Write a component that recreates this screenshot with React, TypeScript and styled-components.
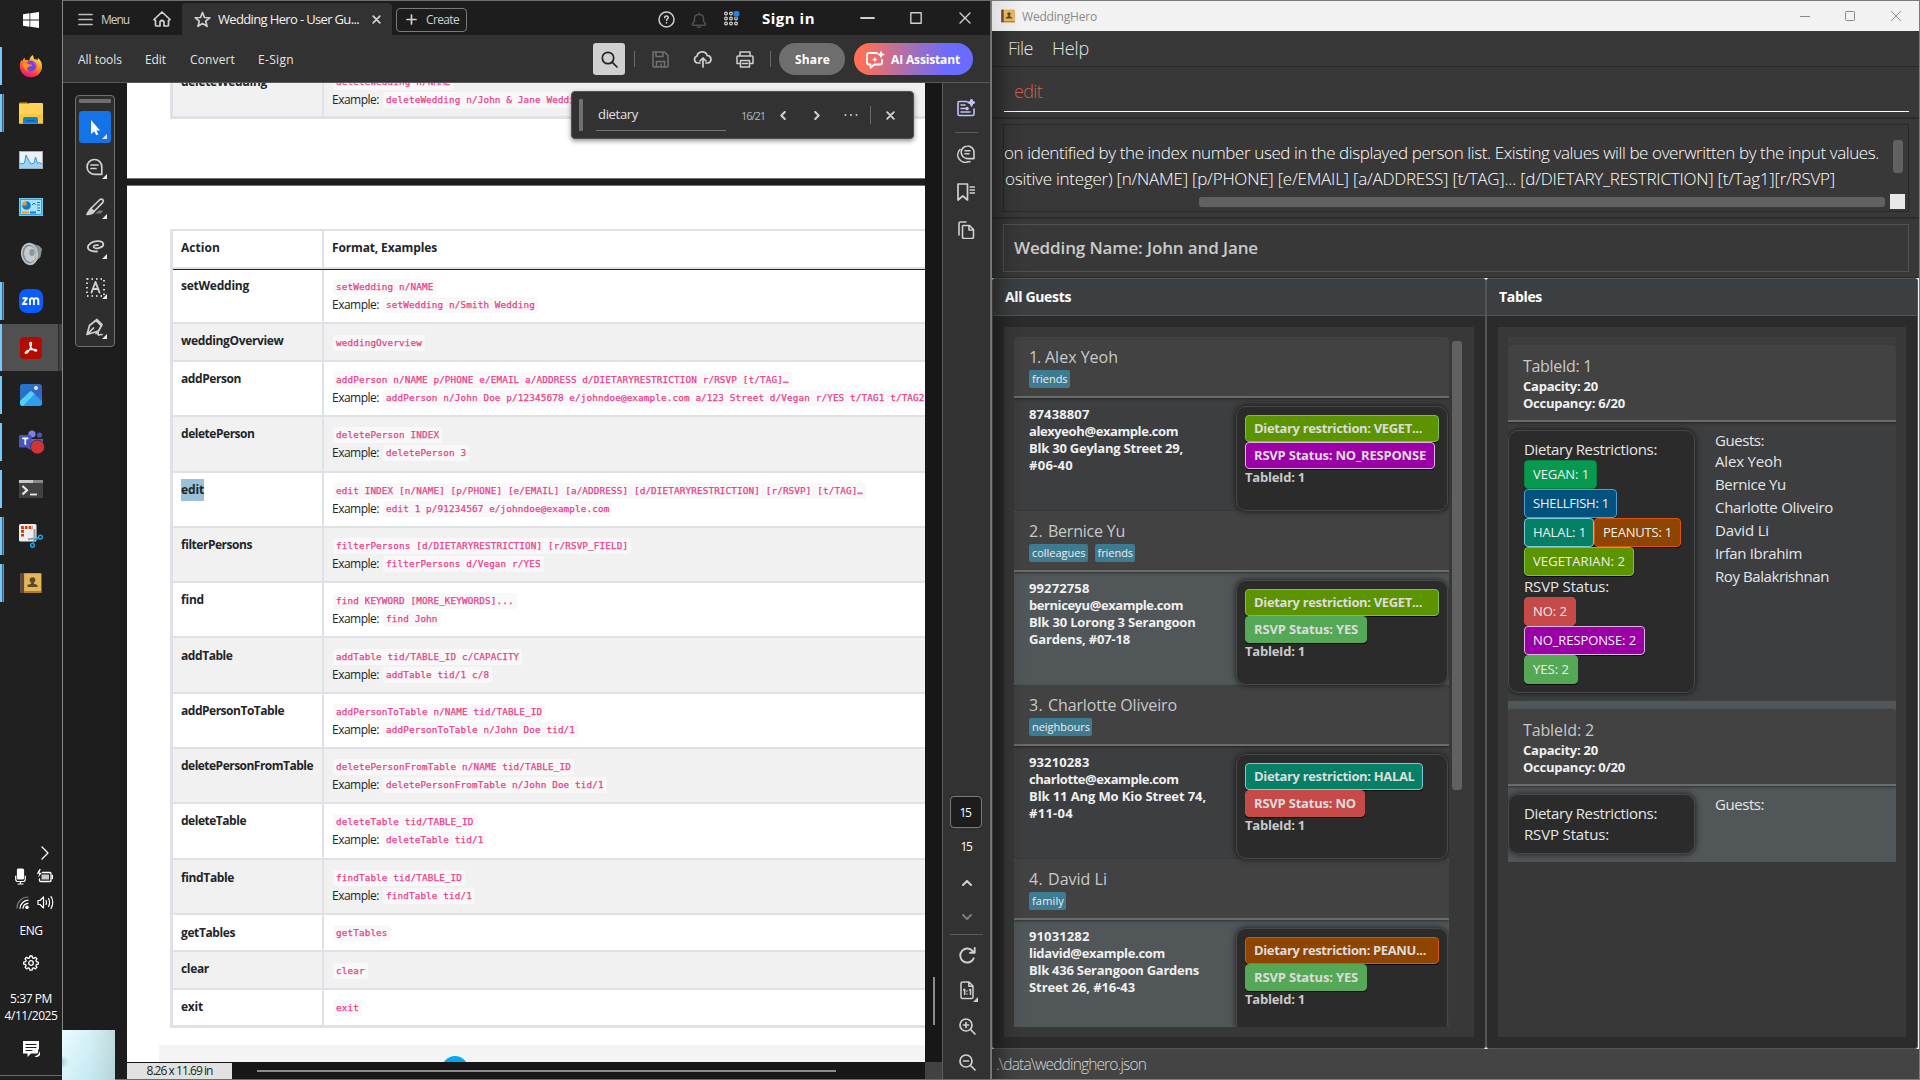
import React, { useLayoutEffect, useRef, useState } from "react";
import styled, { createGlobalStyle, css } from "styled-components";

const Global = createGlobalStyle`
  *, *::before, *::after { box-sizing: border-box; }
  html, body { margin: 0; padding: 0; background: #1d1d1d; overflow: hidden; }
  body { font-family: "Open Sans", "Noto Sans", sans-serif; font-size: 12px; }
  svg { display: block; flex: none; }
`;

/* ---------- text tracked to a given width ---------- */

const TextSpan = styled.span`
  display: inline-block;
  white-space: pre;
`;

function Txt({ w, children }: { w: number; children: string }) {
  const ref = useRef<HTMLSpanElement>(null);
  const [tracking, setTracking] = useState(0);
  useLayoutEffect(() => {
    if (ref.current) {
      const natural = ref.current.getBoundingClientRect().width;
      setTracking((w + 1 - natural) / children.length);
    }
  }, []);
  return (
    <TextSpan ref={ref} style={{ letterSpacing: `${tracking}px` }}>
      {children}
    </TextSpan>
  );
}

/* ---------- shared ---------- */

const Screen = styled.div`
  position: relative;
  display: flex;
  width: 1920px;
  height: 1080px;
  overflow: hidden;
`;

const Spacer = styled.div`
  flex: 1;
`;

/* ---------- taskbar ---------- */

const Taskbar = styled.aside`
  width: 63px;
  height: 1080px;
  flex: none;
  display: flex;
  flex-direction: column;
  background: #202020;
  border-right: 1px solid #868686;
  color: #fff;
`;

const StartButton = styled.div`
  height: 42px;
  padding: 12px 0 0 23px;
`;

const TaskItem = styled.div<{ $active?: boolean }>`
  height: 47px;
  display: flex;
  align-items: center;
  padding-right: ${(p) => (p.$active ? 0 : 4)}px;
  ${(p) =>
    p.$active &&
    css`
      background: linear-gradient(90deg, #505050 58px, #2c2c2c 58px, #2c2c2c 59px, #3f3f3f 59px);
    `}
`;

const RunMark = styled.i<{ $kind: "none" | "one" | "many" | "full" }>`
  width: 4px;
  height: ${(p) => (p.$kind === "full" ? 47 : 38)}px;
  background: ${(p) =>
    p.$kind === "none"
      ? "transparent"
      : p.$kind === "many"
        ? "linear-gradient(90deg, #76c8fb 2px, #35617c 2px, #35617c 2.6px, #5b9fc8 2.6px)"
        : "linear-gradient(90deg, #76c8fb 2px, transparent 2px)"};
`;

const TaskIcon = styled.div`
  width: 54px;
  display: flex;
  justify-content: center;
`;

const Tray = styled.div`
  display: flex;
  flex-direction: column;
  height: 236px;
  padding-top: 5px;
`;

const TrayRow = styled.div<{ $h: number; $gap?: number; $pl?: number }>`
  height: ${(p) => p.$h}px;
  flex: none;
  display: flex;
  align-items: center;
  gap: ${(p) => p.$gap || 0}px;
  padding-left: ${(p) => p.$pl || 0}px;
`;

const TrayText = styled.div<{ $h: number }>`
  height: ${(p) => p.$h}px;
  flex: none;
  line-height: ${(p) => p.$h}px;
  text-align: center;
  font-size: 12px;
`;

const TrayEdge = styled.div`
  height: 1px;
  flex: none;
  margin-bottom: 4px;
  background: #6a6a6a;
`;

const Thumb = styled.div`
  position: absolute;
  left: 62px;
  top: 1030px;
  width: 53px;
  height: 50px;
  background:
    radial-gradient(circle at 0 32px, rgba(140, 180, 190, 0.6), transparent 7px),
    linear-gradient(180deg, rgba(255, 255, 255, 0.15), rgba(170, 215, 225, 0.25)),
    linear-gradient(90deg, #e6fdff, #cdeef6 55%, #b9d3d6);
`;

/* ---------- acrobat ---------- */

const Acrobat = styled.main`
  width: 928px;
  flex: none;
  display: flex;
  flex-direction: column;
  border: solid #6d6d6d;
  border-width: 1px 1px 1px 0;
  background: #1d1d1d;
  color: #e4e4e4;
`;

const TabStrip = styled.div`
  height: 34px;
  flex: none;
  display: flex;
  align-items: center;
  padding-left: 15px;
  background: #1d1d1d;
`;

const At = styled.div<{ $ml?: number; $mt?: number; $c?: string; $fs?: number; $b?: number }>`
  display: flex;
  align-items: center;
  flex: none;
  margin-left: ${(p) => p.$ml || 0}px;
  margin-top: ${(p) => p.$mt || 0}px;
  color: ${(p) => p.$c || "inherit"};
  font-size: ${(p) => p.$fs || 12}px;
  font-weight: ${(p) => p.$b || 400};
`;

const DocTab = styled.div`
  align-self: flex-end;
  width: 210px;
  height: 32px;
  margin-left: 11px;
  padding: 0 11px 0 12px;
  display: flex;
  align-items: center;
  border-radius: 4px 4px 0 0;
  background: #323232;
  color: #f2f2f2;
  font-size: 13px;
`;

const CreateButton = styled.div`
  width: 71px;
  height: 24px;
  margin: 3px 0 0 4px;
  padding-left: 9px;
  display: flex;
  align-items: center;
  border: 1px solid #7a7a7a;
  border-radius: 4px;
  color: #d0d0d0;
`;

const Toolbar = styled.div`
  height: 48px;
  flex: none;
  display: flex;
  align-items: center;
  padding: 1px 0 0 15px;
  background: #323232;
  border-bottom: 1px solid #585858;
`;

const SearchButton = styled.div`
  width: 32px;
  height: 32px;
  display: flex;
  align-items: center;
  justify-content: center;
  border-radius: 3px;
  background: #d0d0d0;
`;

const VLine = styled.i<{ $ml: number; $h?: number }>`
  width: 1px;
  height: ${(p) => p.$h || 16}px;
  margin-left: ${(p) => p.$ml}px;
  background: #6a6a6a;
`;

const Pill = styled.div<{ $w: number; $bg: string; $ml: number; $pl: number }>`
  width: ${(p) => p.$w}px;
  height: 32px;
  margin-left: ${(p) => p.$ml}px;
  padding-left: ${(p) => p.$pl}px;
  display: flex;
  align-items: center;
  gap: 6px;
  border-radius: 16px;
  background: ${(p) => p.$bg};
  color: #fff;
  font-size: 12px;
  font-weight: 700;
`;

const Viewer = styled.div`
  flex: 1;
  min-height: 0;
  display: flex;
`;

const Gutter = styled.div`
  width: 64px;
  flex: none;
  padding: 12px 0 0 12px;
`;

const Palette = styled.div`
  width: 40px;
  height: 252px;
  display: flex;
  flex-direction: column;
  align-items: center;
  padding-top: 3px;
  border: 1px solid #717171;
  border-radius: 4px;
  background: #2e2e2e;
`;

const Grip = styled.i`
  width: 32px;
  height: 4px;
  flex: none;
  margin-bottom: 8px;
  border-radius: 1px;
  background: #6f6f6f;
`;

const Tool = styled.div<{ $on?: boolean }>`
  width: 32px;
  height: 32px;
  flex: none;
  margin-bottom: 8px;
  border-radius: 3px;
  background: ${(p) => (p.$on ? "#1473e6" : "transparent")};
`;

const Doc = styled.div`
  width: 798px;
  flex: none;
  display: flex;
  flex-direction: column;
`;

const PageTop = styled.div`
  height: 96px;
  flex: none;
  overflow: hidden;
  padding-left: 43px;
  background: #fff;
  border-bottom: 1px solid #707070;
`;

const PageMain = styled.div`
  height: 877px;
  flex: none;
  margin-top: 6px;
  overflow: hidden;
  display: flex;
  flex-direction: column;
  border-top: 1px solid #707070;
  background: #fff;
`;

const Table = styled.div<{ $first?: boolean }>`
  border-left: 3px solid #dee2e6;
  border-bottom: 1px solid #dee2e6;
  color: #212529;
  ${(p) =>
    p.$first
      ? css`
          margin-top: -20px;
        `
      : css`
          margin: 43px 0 0 43px;
          border-top: 2px solid #dee2e6;
        `}
`;

const HeadRow = styled.div`
  height: 39px;
  display: grid;
  grid-template-columns: 151px 1fr;
  border-bottom: 1px solid #20242a;
  font-weight: 700;
  line-height: 34px;
`;

const HeadCell = styled.div<{ $last?: boolean }>`
  padding-left: 8px;
  border-right: ${(p) => (p.$last ? "none" : "2px solid #dee2e6")};
  border-bottom: 2px solid #dee2e6;
`;

const Row = styled.div<{ $h: number; $alt?: boolean }>`
  height: ${(p) => p.$h + 2}px;
  display: grid;
  grid-template-columns: 151px 1fr;
  border-bottom: 2px solid #dee2e6;
  background: ${(p) => (p.$alt ? "#f1f1f1" : "#fff")};
`;

const NameCell = styled.div<{ $pt: number }>`
  padding: ${(p) => p.$pt}px 0 0 8px;
  border-right: 2px solid #dee2e6;
  font-weight: 700;
  line-height: 18px;
`;

const FormatCell = styled.div<{ $pt: number }>`
  padding: ${(p) => p.$pt}px 0 0 8px;
  min-width: 0;
  overflow: hidden;
`;

const CodeLine = styled.div`
  height: 18px;
  display: flex;
  align-items: center;
  white-space: nowrap;
  line-height: 18px;
`;

const Code = styled.code<{ $gap?: boolean }>`
  height: 16px;
  flex: none;
  line-height: 16px;
  margin-left: ${(p) => (p.$gap ? 4 : 1)}px;
  padding: 0 3px 0 3px;
  border-radius: 3px;
  background: #f8f8f8;
  color: #e83e8c;
  font-family: "DejaVu Sans Mono", "Liberation Mono", monospace;
  font-size: 9.3px;
  letter-spacing: 0.132px;
  -webkit-text-stroke: 0.25px #e83e8c;
`;

const Mark = styled.span`
  display: inline-block;
  height: 22px;
  line-height: 22px;
  margin-top: -2px;
  background: #9bc0da;
`;

const PageFooter = styled.div`
  height: 17px;
  margin: 17px 0 0 32px;
  overflow: hidden;
  background: #f4f4f4;
`;

const Dot = styled.i`
  display: block;
  width: 26px;
  height: 26px;
  margin: 11px 0 0 283px;
  border-radius: 50%;
  background: #06a9f0;
`;

const BottomBar = styled.div`
  flex: 1;
  display: flex;
  align-items: center;
  background: #171717;
`;

const PageSize = styled.div`
  width: 105px;
  height: 16px;
  display: flex;
  align-items: center;
  justify-content: center;
  background: #e1e1e1;
  color: #222;
`;

const HThumb = styled.i`
  width: 579px;
  height: 2px;
  margin-left: 25px;
  background: #8c8c8c;
`;

const ScrollStrip = styled.div`
  width: 17px;
  flex: none;
  display: flex;
  flex-direction: column;
  align-items: center;
  background: #171717;
`;

const VThumb = styled.i`
  width: 2px;
  height: 48px;
  margin: 894px 0 37px;
  background: #8c8c8c;
`;

const Corner = styled.i`
  width: 17px;
  flex: 1;
  background: #424242;
`;

const Rail = styled.div`
  width: 48px;
  flex: none;
  display: flex;
  flex-direction: column;
  align-items: center;
  padding-right: 1px;
  border-left: 1px solid #5c5c5c;
  background: #323232;
  color: #d0d0d0;
`;

const RailCell = styled.div<{ $h: number; $dx?: number }>`
  height: ${(p) => p.$h}px;
  flex: none;
  display: flex;
  align-items: center;
  justify-content: center;
  padding-left: ${(p) => p.$dx || 0}px;
  color: #fff;
  font-size: 12px;
`;

const RailLine = styled.i<{ $w: number }>`
  width: ${(p) => p.$w}px;
  height: 1px;
  flex: none;
  background: #5c5c5c;
`;

const PageBox = styled.div`
  width: 32px;
  height: 32px;
  flex: none;
  display: flex;
  align-items: center;
  justify-content: center;
  padding-right: 2px;
  border: 1px solid #7a7a7a;
  border-radius: 4px;
  background: #1d1d1d;
`;

const FindBar = styled.div`
  position: absolute;
  left: 571px;
  top: 91px;
  width: 343px;
  height: 48px;
  display: flex;
  align-items: center;
  padding-left: 7px;
  border: 1px solid #515151;
  border-radius: 4px;
  background: #323232;
  box-shadow: 0 2px 5px rgba(0, 0, 0, 0.45);
  color: #d8d8d8;
`;

const FindGrip = styled.i`
  width: 4px;
  height: 32px;
  border-radius: 1px;
  background: #707070;
`;

const FindInput = styled.div`
  width: 130px;
  height: 32px;
  margin-left: 13px;
  padding: 0 0 0 2px;
  line-height: 30px;
  border-bottom: 1px solid #757575;
  font-size: 13px;
  color: #e2e2e2;
`;

/* ---------- wedding app ---------- */

const WeddingWindow = styled.section`
  position: relative;
  width: 929px;
  display: flex;
  flex-direction: column;
  border: 1px solid #7b7b7b;
  background: #383838;
  color: #e6e6e6;
`;

const EdgeShade = styled.i`
  position: absolute;
  left: 0;
  top: 30px;
  width: 34px;
  bottom: 0;
  background: linear-gradient(90deg, rgba(0, 0, 0, 0.34), rgba(0, 0, 0, 0.08) 50%, transparent);
  pointer-events: none;
`;

const TitleBar = styled.div`
  height: 30px;
  display: flex;
  align-items: center;
  padding-left: 9px;
  background: linear-gradient(90deg, #e0e0e0, #f2f2f2 30px);
  color: #8a8a8a;
`;

const MenuBar = styled.div`
  height: 36px;
  display: flex;
  align-items: center;
  padding: 0 0 1px 16px;
  gap: 19px;
  border-bottom: 1px solid #292929;
  font-size: 18px;
  font-weight: 300;
`;

const CommandArea = styled.div`
  height: 52px;
  padding: 4px 10px 0 12px;
  border-bottom: 2px solid #2c2c2c;
`;

const CommandInput = styled.div`
  height: 41px;
  padding-left: 10px;
  line-height: 40px;
  border-bottom: 1px solid #fff;
  color: #cf604e;
  font-size: 18px;
  font-weight: 300;
`;

const ResultArea = styled.div`
  height: 100px;
  padding: 5px 10px 6px 11px;
  border-bottom: 2px solid #2c2c2c;
`;

const ResultBox = styled.div`
  height: 88px;
  border: 1px solid #282828;
`;

const ResultTop = styled.div`
  height: 69px;
  display: flex;
  justify-content: space-between;
  padding: 15px 5px 0 0;
`;

const ResultText = styled.div`
  line-height: 26px;
  font-size: 17px;
  font-weight: 300;
  color: #fff;
`;

const ResultLine = styled.div<{ $ml?: number }>`
  margin-left: ${(p) => p.$ml || 0}px;
  height: 26px;
`;

const Bar = styled.i<{ $w: number; $h: number }>`
  display: block;
  flex: none;
  width: ${(p) => p.$w}px;
  height: ${(p) => p.$h}px;
  border-radius: 3px;
  background: #616161;
`;

const ResultBottom = styled.div`
  display: flex;
  align-items: center;
  justify-content: flex-end;
  gap: 5px;
  padding-right: 3px;
`;

const ScrollCorner = styled.i`
  width: 15px;
  height: 15px;
  background: #e8e8e8;
`;

const NameArea = styled.div`
  height: 59px;
  padding: 5px 10px 0 11px;
  border-bottom: 1px solid #2c2c2c;
`;

const NameBox = styled.div`
  height: 48px;
  padding-left: 10px;
  line-height: 46px;
  border: 1px solid #525252;
  color: #cbcbcb;
  font-size: 17px;
  font-weight: 600;
`;

const Split = styled.div`
  height: 771px;
  display: flex;
  background: #f4f4f4;
`;

const Pane = styled.div<{ $w: number }>`
  width: ${(p) => p.$w}px;
  flex: none;
  border: 1px solid #555;
  border-radius: 3px;
  overflow: hidden;
  background: #2b2b2b;
`;

const PaneHead = styled.div`
  height: 37px;
  padding-left: 12px;
  line-height: 36px;
  border-bottom: 1px solid #555;
  background: #3c3f41;
  color: #fff;
  font-size: 14px;
  font-weight: 700;
`;

const PaneBody = styled.div`
  height: 710px;
  margin: 11px 11px 0;
  padding: 10px;
  display: flex;
  gap: 3px;
  background: #383838;
`;

const List = styled.div<{ $w: number }>`
  width: ${(p) => p.$w}px;
  height: 690px;
  flex: none;
  overflow: hidden;
`;

const ListBar = styled.div`
  padding-top: 4px;
`;

const cell = (alt?: boolean) => (alt ? "#515658" : "#3c3e40");

const Guest = styled.div<{ $alt?: boolean }>`
  height: 174px;
  background: ${(p) => cell(p.$alt)};
`;

const CardHead = styled.div<{ $h: number; $pt: number }>`
  height: ${(p) => p.$h}px;
  padding: ${(p) => p.$pt}px 15px 0;
  border-bottom: 2px solid #6b6b6b;
  border-radius: 4px 4px 0 0;
  background: #424242;
  box-shadow: 0 1px 3px rgba(0, 0, 0, 0.45);
`;

const CardTitle = styled.div`
  height: 22px;
  display: flex;
  gap: 5px;
  line-height: 22px;
  font-size: 16px;
  color: #c9c9c9;
`;

const Tags = styled.div`
  display: flex;
  gap: 7px;
  margin-top: 2px;
`;

const Tag = styled.span`
  height: 18px;
  line-height: 18px;
  padding: 0 2px 0 3px;
  border-radius: 2px;
  background: #3e7b91;
  color: #eee;
  font-size: 11px;
`;

const GuestBody = styled.div`
  display: flex;
`;

const Fields = styled.div`
  width: 222px;
  padding: 8px 0 0 15px;
  color: #f0f0f0;
  font-size: 13px;
  font-weight: 700;
  line-height: 17px;
`;

const Panel = styled.div<{ $w: number; $p: string; $h?: number }>`
  width: ${(p) => p.$w}px;
  ${(p) => p.$h && `height: ${p.$h}px;`}
  margin-top: 8px;
  padding: ${(p) => p.$p};
  border: 1px solid #484848;
  border-radius: 10px;
  background: #2b2b2b;
  box-shadow: 0 0 6px rgba(0, 0, 0, 0.7);
`;

const GuestPanelText = styled.div`
  height: 17px;
  line-height: 17px;
  font-size: 13px;
  font-weight: 700;
  color: #c9c9c9;
`;

const Chip = styled.div<{ $bg: string; $bd: string; $h: number; $w: number; $b?: boolean }>`
  width: ${(p) => p.$w}px;
  height: ${(p) => p.$h}px;
  padding-left: 8px;
  line-height: ${(p) => p.$h - 3}px;
  border: 1px solid ${(p) => p.$bd};
  border-radius: 4px;
  background: ${(p) => p.$bg};
  box-shadow: 0 1px 0 rgba(0, 0, 0, 0.8);
  color: ${(p) => (p.$b ? "#dcdcdc" : "#f0f0f0")};
  font-size: 13px;
  font-weight: ${(p) => (p.$b ? 700 : 400)};
`;

const ChipRow = styled.div`
  display: flex;
`;

const TableCard = styled.div<{ $alt?: boolean }>`
  padding: 8px 0;
  background: ${(p) => cell(p.$alt)};
`;

const TableFacts = styled.div`
  margin-top: 1px;
  line-height: 17px;
  font-size: 13px;
  font-weight: 700;
  color: #f0f0f0;
`;

const TableBody = styled.div`
  display: flex;
`;

const SumLabel = styled.div<{ $h?: number }>`
  height: ${(p) => p.$h || 21}px;
  line-height: 21px;
  font-size: 15px;
  color: #e6e6e6;
`;

const GuestNames = styled.div`
  padding: 8px 0 0 20px;
  font-size: 15px;
  color: #e6e6e6;
`;

const GuestName = styled.div`
  height: 23px;
  line-height: 23px;
`;

const StatusBar = styled.div`
  flex: 1;
  display: flex;
  align-items: center;
  padding-left: 4px;
  background: #444;
  font-size: 15.5px;
  font-weight: 300;
  color: #d8d8d8;
`;

/* ---------- icons ---------- */

type IcoProps = {
  s?: number;
  w?: number;
  h?: number;
  c?: string;
  sw?: number;
  children: React.ReactNode;
};

const Ico = ({ s = 18, w, h, c = "#d0d0d0", sw = 1.6, children }: IcoProps) => (
  <svg
    width={w || s}
    height={h || s}
    viewBox={`0 0 ${w || s} ${h || s}`}
    fill="none"
    stroke={c}
    strokeWidth={sw}
    strokeLinecap="round"
    strokeLinejoin="round"
  >
    {children}
  </svg>
);

const Book = ({ s }: { s: number }) => (
  <svg width={s} height={s} viewBox="0 0 22 22">
    <rect x="0.5" y="1" width="21" height="20" rx="1" fill="#c99a4a" />
    <rect x="4" y="2" width="17" height="17" fill="#e6b558" />
    <rect x="0.5" y="1" width="3.6" height="20" fill="#5c4a42" />
    <rect x="4" y="19.2" width="17.5" height="1.6" fill="#a87728" />
    <circle cx="12.5" cy="8" r="2.8" fill="#5b4a2a" />
    <path d="M11.3 10h2.4l.4 1.8 3.4 1.2v2h-10v-2l3.4-1.2z" fill="#5b4a2a" />
  </svg>
);

const taskIcons: { kind: "none" | "one" | "many" | "full"; icon: React.ReactNode }[] = [
  {
    kind: "one",
    icon: (
      <svg width="24" height="24" viewBox="0 0 24 24">
        <defs>
          <linearGradient id="fx" x1="0.8" y1="0" x2="0.3" y2="1">
            <stop offset="0" stopColor="#fff44f" />
            <stop offset="0.4" stopColor="#ff9a1f" />
            <stop offset="0.75" stopColor="#ff3b47" />
            <stop offset="1" stopColor="#e3128a" />
          </linearGradient>
        </defs>
        <path
          d="M13.5 1c1 1.300 1.400 2.800 1.600 4.300C16.800 5 18 5.200 19 6c-.1-1-.3-1.600-.2-2.200C21.800 6.200 23.500 9.500 23 13.500 22.300 19.500 17.500 23.300 12 23.300 5.800 23.300.8 18.500.8 12.300c0-2.800.8-5 1.900-6.600l.4 1.800C3.700 5.800 4.500 4.500 5.600 3.600l.4 2.500c1.500-.4 3-.1 4.300.6C10.600 4.500 11.600 2.400 13.500 1z"
          fill="url(#fx)"
        />
        <circle cx="12" cy="12" r="5.400" fill="#7a3fe0" />
        <path d="M3.500 10.500c2-1.800 4.300-1.800 6.500-.3 1.500.2 2.700.2 3.300 1.100-1.300 1.300-3.500.9-4.700 2.300-.8 1-.6 2.600.4 3.700-3-.6-5-3-5.500-6.800z" fill="#ff9021" />
        <path d="M14 7.500c2 1 3 2.600 3.300 4.500" stroke="#b45cff" strokeWidth="1.300" fill="none" />
      </svg>
    ),
  },
  {
    kind: "many",
    icon: (
      <svg width="24" height="22" viewBox="0 0 24 22">
        <path d="M0 1.500Q0 .5 1 .5h7l2 2h-10z" fill="#d99f00" />
        <path d="M0 2h8.500l2-1H23q1 0 1 1v19.500H0z" fill="#ffd257" />
        <path d="M0 12h24v9.500H0z" fill="#fbc93d" />
        <path d="M4 21.500V17q0-2 2-2h11q2 0 2 2v4.500z" fill="#0f7fd4" />
        <path d="M8 18.500h7.500" stroke="#085a9c" />
      </svg>
    ),
  },
  {
    kind: "none",
    icon: (
      <svg width="24" height="18" viewBox="0 0 24 18">
        <rect x=".5" y=".5" width="23" height="17" fill="#eef1f4" stroke="#a4afba" />
        <path d="M1 12l2 1 2.500-1L7 4l3 6 2 3 3-1 1.500-6 2 6.500 2-1L23 13v4H1z" fill="#9cd3f5" />
        <path d="M1 12l2 1 2.500-1L7 4l3 6 2 3 3-1 1.500-6 2 6.500 2-1L23 13" fill="none" stroke="#2d97dd" />
      </svg>
    ),
  },
  {
    kind: "none",
    icon: (
      <svg width="24" height="18" viewBox="0 0 24 18">
        <rect x=".5" y=".5" width="23" height="17" fill="#29a3e8" stroke="#71cbf7" />
        <rect x="2" y="2" width="20" height="14" fill="#a9e2fb" />
        <circle cx="7.500" cy="7.500" r="4.300" fill="#1477c8" />
        <path d="M7.500 7.500V3.200a4.300 4.300 0 0 0-4.300 4.300z" fill="#ff9716" />
        <path d="M13 7l2-2 1.500 2M18 4.500h3M18 7h3M18 10h3M18 12.500h3" stroke="#1477c8" fill="none" />
        <path d="M3 14.500h7" stroke="#ff9716" strokeWidth="2" />
        <path d="M11 14.500h6" stroke="#1477c8" strokeWidth="2" />
      </svg>
    ),
  },
  {
    kind: "none",
    icon: (
      <svg width="23" height="24" viewBox="0 0 23 24">
        <path d="M12 1.500l7.500 2.500 2.500 3-1.500 8-7.500 7z" fill="#8a9094" />
        <ellipse cx="9.500" cy="12" rx="8.500" ry="11.200" transform="rotate(-8 9.500 12)" fill="#bfc5c9" />
        <ellipse cx="9.300" cy="12" rx="6.800" ry="9.300" transform="rotate(-8 9.300 12)" fill="#83898d" />
        <ellipse cx="10" cy="12" rx="5.800" ry="8" transform="rotate(-8 10 12)" fill="#c4cacd" />
        <ellipse cx="12" cy="10.500" rx="2.600" ry="3.400" fill="#8f969a" />
      </svg>
    ),
  },
  {
    kind: "many",
    icon: (
      <svg width="24" height="24" viewBox="0 0 24 24">
        <rect width="24" height="24" rx="8" fill="#0b5cff" />
        <path d="M3.500 9.300H8L3.700 15H8.300" stroke="#fff" strokeWidth="1.900" fill="none" strokeLinejoin="round" />
        <path d="M11 16V11q0-1.800 1.900-1.800T14.900 11v5M14.900 11.200q0-2 2.200-2t2.200 2V16" stroke="#fff" strokeWidth="1.900" fill="none" />
      </svg>
    ),
  },
  {
    kind: "full",
    icon: (
      <svg width="22" height="22" viewBox="0 0 22 22">
        <rect width="22" height="22" rx="4" fill="#b30b00" />
        <path
          d="M10.600 5.300c1.500 0 .9 3.300-.4 6-1.300 2.700-3.100 5.500-4.600 5.100-1.300-.5.800-2.900 4.400-3.700 3.500-.8 7-.4 6.700.9-.4 1.300-3.500-.3-5.300-2.500-1.800-2.300-2.300-5.700-.8-5.800z"
          fill="none"
          stroke="#fff"
          strokeWidth="1.300"
        />
      </svg>
    ),
  },
  {
    kind: "one",
    icon: (
      <svg width="22" height="22" viewBox="0 0 22 22">
        <defs>
          <linearGradient id="ph" x1="0" y1="0" x2="1" y2="1">
            <stop offset="0" stopColor="#1b7fd0" />
            <stop offset="0.6" stopColor="#3a5fc4" />
            <stop offset="1" stopColor="#1f7fe0" />
          </linearGradient>
        </defs>
        <rect width="22" height="22" rx="3" fill="url(#ph)" />
        <path d="M0 17L9.500 8q1.500-1.300 3 0L22 17.500V19q0 3-3 3H3q-3 0-3-3z" fill="#2f9df0" />
        <path d="M0 17L9.500 8q1.500-1.300 3 0l2 2L3 22q-3 0-3-3z" fill="#4fd2f7" />
        <circle cx="16" cy="4" r="2" fill="#e6f4ff" />
      </svg>
    ),
  },
  {
    kind: "one",
    icon: (
      <svg width="28" height="24" viewBox="-2 0 28 24">
        <circle cx="13" cy="4" r="3.600" fill="#7b83eb" />
        <circle cx="20.500" cy="5" r="2.600" fill="#4a53c0" />
        <path d="M7 9h17v7q-1 5-7 5-8-1-10-5z" fill="#5b63d3" />
        <rect x="0" y="5" width="12.500" height="12.500" rx="1" fill="#4b53bc" />
        <path d="M3.300 8.300h6M6.300 8.300v6.500" stroke="#fff" strokeWidth="1.700" />
        <circle cx="18.500" cy="17" r="7" fill="#d13438" stroke="#202020" strokeWidth=".6" />
      </svg>
    ),
  },
  {
    kind: "one",
    icon: (
      <svg width="24" height="18" viewBox="0 0 24 18">
        <rect width="24" height="18" fill="#424242" />
        <rect width="24" height="3" fill="#8a8a8a" />
        <rect width="14" height="3" fill="#c8c8c8" />
        <path d="M3.500 6l4.500 4.200-4.500 4.200" stroke="#e8e8e8" strokeWidth="2.200" fill="none" />
        <path d="M11 14.500h7" stroke="#e8e8e8" strokeWidth="1.800" />
      </svg>
    ),
  },
  {
    kind: "many",
    icon: (
      <svg width="24" height="24" viewBox="0 0 24 24">
        <rect width="17.500" height="17.500" rx="1.500" fill="#e9eef2" />
        <path d="M3.500 12.500V3.500H14" stroke="#d83b01" strokeWidth="3" strokeDasharray="2.600 1.200" fill="none" />
        <path d="M15.500 5v11M9 15.300l10-1" stroke="#9aa0a5" strokeWidth="2" />
        <circle cx="21.500" cy="13.200" r="1.900" stroke="#1aa0e8" strokeWidth="1.500" fill="none" />
        <circle cx="13.500" cy="21.300" r="1.900" stroke="#1aa0e8" strokeWidth="1.500" fill="none" />
        <path d="M14 19.500l1.500-3.500 4.500-2.300" stroke="#1aa0e8" strokeWidth="1.400" fill="none" />
      </svg>
    ),
  },
  { kind: "many", icon: <Book s={22} /> },
];

const Fold = () => <path d="M28 23v5h-5z" fill="#e8e8e8" stroke="none" />;

const CommentShape = () => (
  <>
    <path d="M15.500 8.500a7.300 7.300 0 1 0 0 14.800h7.300V16a7.300 7.300 0 0 0-7.300-7.500z" />
    <path d="M12 14h7M12 17.500h5" />
  </>
);

/* ---------- data ---------- */

type CmdRow = {
  h: number;
  name: string;
  w: number;
  fmt: string;
  ex?: string;
  mark?: boolean;
  namePad?: number;
  fmtPad?: number;
};

const rows: CmdRow[] = [
  {
    h: 52,
    name: "setWedding",
    w: 67,
    fmt: "setWedding n/NAME",
    ex: "setWedding n/Smith Wedding",
    namePad: 7,
    fmtPad: 8,
  },
  { h: 36, name: "weddingOverview", w: 101.5, fmt: "weddingOverview", fmtPad: 10 },
  {
    h: 53,
    name: "addPerson",
    w: 59,
    fmt: "addPerson n/NAME p/PHONE e/EMAIL a/ADDRESS d/DIETARYRESTRICTION r/RSVP [t/TAG]…",
    ex: "addPerson n/John Doe p/12345678 e/johndoe@example.com a/123 Street d/Vegan r/YES t/TAG1 t/TAG2",
  },
  { h: 54, name: "deletePerson", w: 72.5, fmt: "deletePerson INDEX", ex: "deletePerson 3" },
  {
    h: 53,
    name: "edit",
    w: 22,
    fmt: "edit INDEX [n/NAME] [p/PHONE] [e/EMAIL] [a/ADDRESS] [d/DIETARYRESTRICTION] [r/RSVP] [t/TAG]…",
    ex: "edit 1 p/91234567 e/johndoe@example.com",
    mark: true,
  },
  { h: 53, name: "filterPersons", w: 70, fmt: "filterPersons [d/DIETARYRESTRICTION] [r/RSVP_FIELD]", ex: "filterPersons d/Vegan r/YES" },
  { h: 53, name: "find", w: 22, fmt: "find KEYWORD [MORE_KEYWORDS]...", ex: "find John" },
  {
    h: 54,
    name: "addTable",
    w: 50.5,
    fmt: "addTable tid/TABLE_ID c/CAPACITY",
    ex: "addTable tid/1 c/8",
    namePad: 9,
    fmtPad: 10,
  },
  { h: 53, name: "addPersonToTable", w: 102, fmt: "addPersonToTable n/NAME tid/TABLE_ID", ex: "addPersonToTable n/John Doe tid/1" },
  {
    h: 53,
    name: "deletePersonFromTable",
    w: 131,
    fmt: "deletePersonFromTable n/NAME tid/TABLE_ID",
    ex: "deletePersonFromTable n/John Doe tid/1",
  },
  { h: 54, name: "deleteTable", w: 64, fmt: "deleteTable tid/TABLE_ID", ex: "deleteTable tid/1" },
  { h: 53, name: "findTable", w: 52, fmt: "findTable tid/TABLE_ID", ex: "findTable tid/1", namePad: 9 },
  { h: 35, name: "getTables", w: 53, fmt: "getTables", namePad: 9 },
  { h: 36, name: "clear", w: 27, fmt: "clear", fmtPad: 10 },
  { h: 35, name: "exit", w: 21, fmt: "exit" },
];

const CommandRow = ({ row, alt }: { row: CmdRow; alt: boolean }) => (
  <Row $h={row.h} $alt={alt}>
    <NameCell $pt={row.namePad ?? 8}>
      {row.mark ? (
        <Mark>
          <Txt w={row.w}>{row.name}</Txt>
        </Mark>
      ) : (
        <Txt w={row.w}>{row.name}</Txt>
      )}
    </NameCell>
    <FormatCell $pt={row.fmtPad ?? 9}>
      <CodeLine>
        <Code>{row.fmt}</Code>
      </CodeLine>
      {row.ex && (
        <CodeLine>
          <Txt w={46}>Example:</Txt>
          <Code $gap>{row.ex}</Code>
        </CodeLine>
      )}
    </FormatCell>
  </Row>
);

const tone = {
  vegetarian: ["#5c9400", "#7cc142"],
  noResponse: ["#9b00a6", "#dcb6e0"],
  yes: ["#55a855", "#55a855"],
  no: ["#c64a48", "#c64a48"],
  halal: ["#057f66", "#7fc9d6"],
  peanuts: ["#8f4400", "#df5310"],
  vegan: ["#06994f", "#0b8043"],
  shellfish: ["#02527f", "#4b9fd6"],
};
type Tone = keyof typeof tone;
type ChipData = { t: string; tw: number; w: number; tone: Tone };

const GuestChip = ({ d, h, b }: { d: ChipData; h: number; b?: boolean }) => (
  <Chip $bg={tone[d.tone][0]} $bd={tone[d.tone][1]} $h={h} $w={d.w} $b={b}>
    <Txt w={d.tw}>{d.t}</Txt>
  </Chip>
);

type GuestData = {
  no: [string, number];
  n: string;
  nw: number;
  tags: [string, number][];
  fields: [string, number][];
  chips: ChipData[];
};

const rsvpYes: ChipData = { t: "RSVP Status: YES", tw: 103, w: 122, tone: "yes" };

const guests: GuestData[] = [
  {
    no: ["1.", 10],
    n: "Alex Yeoh",
    nw: 72,
    tags: [["friends", 34.5]],
    fields: [
      ["87438807", 59.5],
      ["alexyeoh@example.com", 148],
      ["Blk 30 Geylang Street 29,", 153],
      ["#06-40", 43],
    ],
    chips: [
      { t: "Dietary restriction: VEGET...", tw: 167, w: 194, tone: "vegetarian" },
      { t: "RSVP Status: NO_RESPONSE", tw: 171, w: 190, tone: "noResponse" },
    ],
  },
  {
    no: ["2.", 13],
    n: "Bernice Yu",
    nw: 76,
    tags: [
      ["colleagues", 52.5],
      ["friends", 34.5],
    ],
    fields: [
      ["99272758", 59.5],
      ["berniceyu@example.com", 153],
      ["Blk 30 Lorong 3 Serangoon", 165.5],
      ["Gardens, #07-18", 100],
    ],
    chips: [{ t: "Dietary restriction: VEGET...", tw: 167, w: 194, tone: "vegetarian" }, rsvpYes],
  },
  {
    no: ["3.", 13],
    n: "Charlotte Oliveiro",
    nw: 128,
    tags: [["neighbours", 57]],
    fields: [
      ["93210283", 59.5],
      ["charlotte@example.com", 148.5],
      ["Blk 11 Ang Mo Kio Street 74,", 176],
      ["#11-04", 43],
    ],
    chips: [
      { t: "Dietary restriction: HALAL", tw: 159.5, w: 178, tone: "halal" },
      { t: "RSVP Status: NO", tw: 101, w: 120, tone: "no" },
    ],
  },
  {
    no: ["4.", 13],
    n: "David Li",
    nw: 58,
    tags: [["family", 31]],
    fields: [
      ["91031282", 59.5],
      ["lidavid@example.com", 135],
      ["Blk 436 Serangoon Gardens", 169],
      ["Street 26, #16-43", 105],
    ],
    chips: [{ t: "Dietary restriction: PEANU...", tw: 171, w: 194, tone: "peanuts" }, rsvpYes],
  },
];

const dietRows: ChipData[][] = [
  [{ t: "VEGAN: 1", tw: 55, w: 73, tone: "vegan" }],
  [{ t: "SHELLFISH: 1", tw: 75, w: 93, tone: "shellfish" }],
  [
    { t: "HALAL: 1", tw: 52, w: 70, tone: "halal" },
    { t: "PEANUTS: 1", tw: 68, w: 87, tone: "peanuts" },
  ],
  [{ t: "VEGETARIAN: 2", tw: 91, w: 110, tone: "vegetarian" }],
];
const rsvpRows: ChipData[][] = [
  [{ t: "NO: 2", tw: 33, w: 52, tone: "no" }],
  [{ t: "NO_RESPONSE: 2", tw: 102, w: 121, tone: "noResponse" }],
  [{ t: "YES: 2", tw: 35, w: 54, tone: "yes" }],
];

type TableData = {
  id: number;
  idW: number;
  occ: string;
  diet: ChipData[][];
  rsvp: ChipData[][];
  names: [string, number][];
};

const tables: TableData[] = [
  {
    id: 1,
    idW: 68,
    occ: "Occupancy: 6/20",
    diet: dietRows,
    rsvp: rsvpRows,
    names: [
      ["Alex Yeoh", 66],
      ["Bernice Yu", 70],
      ["Charlotte Oliveiro", 117],
      ["David Li", 53],
      ["Irfan Ibrahim", 86],
      ["Roy Balakrishnan", 113],
    ],
  },
  { id: 2, idW: 70, occ: "Occupancy: 0/20", diet: [], rsvp: [], names: [] },
];

const ChipRows = ({ rows: list }: { rows: ChipData[][] }) => (
  <>
    {list.map((r, i) => (
      <ChipRow key={i}>
        {r.map((d) => (
          <GuestChip key={d.t} d={d} h={29} />
        ))}
      </ChipRow>
    ))}
  </>
);

/* ---------- sections ---------- */

const TaskbarView = () => (
  <Taskbar>
    <StartButton>
      <svg width="16" height="16" viewBox="0 0 16 16" fill="#fff">
        <path d="M0 2.200l6.500-.9v6.300H0zM7.300 1.200L16 0v7.600H7.300zM0 8.400h6.500v6.300L0 13.800zM7.300 8.400H16V16l-8.700-1.200z" />
      </svg>
    </StartButton>
    {taskIcons.map((t, i) => (
      <TaskItem key={i} $active={t.kind === "full"}>
        <RunMark $kind={t.kind} />
        <TaskIcon>{t.icon}</TaskIcon>
      </TaskItem>
    ))}
    <Spacer />
    <Tray>
      <TrayRow $h={18} $pl={41}>
        <Ico w={8} h={14} c="#fff" sw={1.3}>
          <path d="M1 1l6 6-6 6" />
        </Ico>
      </TrayRow>
      <TrayRow $h={28} $pl={15} $gap={10}>
        <Ico w={11} h={17} c="#fff" sw={1.2}>
          <rect x="2.500" y="1" width="6" height="10" rx="1" fill="#fff" />
          <path d="M.7 8v3q0 2.500 2 2.500h5.600q2 0 2-2.500V8M5.500 13.500v2.500M3 16h5" />
        </Ico>
        <Ico w={17} h={14} c="#fff" sw={1.3}>
          <path d="M6.500 3.500H14q1 0 1 1v7q0 1-1 1H4.500q-1 0-1-1V10M16.500 6.500v3" />
          <rect x="5.500" y="5.500" width="7.500" height="5" fill="#c8c8c8" stroke="none" />
          <path d="M3.500 0L.8 4.700h2.400L2.200 8.500 5.800 3.700H3.400L4.800 0z" fill="#fff" stroke="none" />
        </Ico>
      </TrayRow>
      <TrayRow $h={24} $pl={16} $gap={8}>
        <Ico s={13} c="#fff" sw={1.2}>
          <path d="M1 12A11 11 0 0 1 12 1" stroke="#777" />
          <path d="M4 12.300A8.500 8.500 0 0 1 12 4.200M7 12.300A5.500 5.500 0 0 1 12 7.300" />
          <circle cx="11" cy="11.300" r="1.200" fill="#fff" />
        </Ico>
        <Ico w={17} h={15} c="#fff" sw={1.2}>
          <path d="M1 5.500h2l3.500-3.500v11L3 9.500H1z" />
          <path d="M9 5.500q1 2 0 4M11.500 3.500q2.200 4 0 8M14 1.500q3.500 6 0 12" />
        </Ico>
      </TrayRow>
      <TrayText $h={33}>
        <Txt w={22}>ENG</Txt>
      </TrayText>
      <TrayRow $h={32} $pl={23}>
        <Ico s={16} c="#fff" sw={1.3}>
          <path d="M6.900 1h2.200l.4 1.900 1.200.5 1.700-1.100 1.500 1.500-1 1.700.5 1.200 1.900.4v2l-1.900.4-.5 1.200 1 1.700-1.500 1.500-1.700-1.100-1.200.5-.4 1.900H6.900l-.4-1.900-1.200-.5-1.700 1.100-1.500-1.500 1-1.700-.5-1.200L.7 9.100v-2l1.900-.4.5-1.200-1-1.700 1.500-1.500 1.700 1.100 1.200-.5z" />
          <circle cx="8" cy="8" r="2.300" />
        </Ico>
      </TrayRow>
      <TrayRow $h={11}>{null}</TrayRow>
      <TrayText $h={17}>
        <Txt w={41}>5:37 PM</Txt>
      </TrayText>
      <TrayText $h={17}>
        <Txt w={52}>4/11/2025</Txt>
      </TrayText>
      <TrayRow $h={51} $pl={23}>
        <Ico s={17} c="#202020" sw={1.2}>
          <path d="M0 0h16v12.500H8L4.500 16v-3.500H0z" fill="#fff" stroke="none" />
          <path d="M3 3.500h10M3 6.500h10M3 9.500h6" />
          <path d="M10 14a4 4 0 0 0 5.500-5 4 4 0 1 1-5.500 5z" fill="#fff" />
        </Ico>
      </TrayRow>
    </Tray>
    <TrayEdge />
  </Taskbar>
);

const AcrobatView = () => (
  <Acrobat>
    <TabStrip>
      <At $mt={2}>
        <Ico w={15} h={13} c="#bdbdbd" sw={1.7}>
          <path d="M1 1.500h13M1 6.500h13M1 11.500h13" />
        </Ico>
      </At>
      <At $ml={8} $mt={2} $c="#cfcfcf">
        <Txt w={27}>Menu</Txt>
      </At>
      <At $ml={24} $mt={2}>
        <Ico s={18} sw={1.7}>
          <path d="M1 9.500L9 2l8 7.500-1.500 1V15q0 1-1 1H11v-4.500q-2-2-4 0V16H3.500q-1 0-1-1v-4.500z" />
        </Ico>
      </At>
      <DocTab>
        <Ico s={17} sw={1.7}>
          <path d="M8.500 1.500l2 5 5.300.3-4.100 3.400 1.400 5.200-4.600-2.900-4.600 2.900 1.400-5.200L1.200 6.800l5.300-.3z" />
        </Ico>
        <At $ml={7} $fs={13}>
          <Txt w={140}>Wedding Hero - User Gu...</Txt>
        </At>
        <Spacer />
        <Ico s={9} sw={1.8}>
          <path d="M1.200 1.200l6.600 6.600M7.800 1.200L1.200 7.800" />
        </Ico>
      </DocTab>
      <CreateButton>
        <Ico s={11} sw={1.7}>
          <path d="M5.500 1v9M1 5.500h9" />
        </Ico>
        <At $ml={9}>
          <Txt w={32}>Create</Txt>
        </At>
      </CreateButton>
      <At $ml={191} $mt={3}>
        <Ico s={17} sw={1.5}>
          <circle cx="8.500" cy="8.500" r="7.500" />
          <path d="M6.700 6.700q0-1.700 1.800-1.700t1.800 1.500q0 1-1.100 1.600-.6.400-.6 1.300M8.500 11.800v.2" />
        </Ico>
      </At>
      <At $ml={16} $mt={3}>
        <Ico s={16} c="#4f4f4f" sw={1.5}>
          <path d="M8 1v1M3.500 9V6.500Q3.500 2.500 8 2.500t4.500 4V9l2 3v1.200H1.500V12zM6.300 14.800q1.700 1 3.400 0" />
        </Ico>
      </At>
      <At $ml={17} $mt={2}>
        <Ico s={16} sw={1.2}>
          {[2.5, 7.5, 12.5].map((y) =>
            [2, 7, 12].map((x) => <circle key={`${x}-${y}`} cx={x} cy={y} r="1.400" />),
          )}
          <circle cx="12.500" cy="2.800" r="3.400" fill="#2680eb" stroke="#1d1d1d" strokeWidth=".5" />
        </Ico>
      </At>
      <At $ml={22} $c="#fff" $fs={15} $b={700}>
        <Txt w={52}>Sign in</Txt>
      </At>
      <At $ml={45}>
        <Ico w={15} h={12} sw={1.8}>
          <path d="M1 6h13" />
        </Ico>
      </At>
      <At $ml={35}>
        <Ico s={12} sw={1.4}>
          <path d="M.8.8h10.400v10.400H.8z" />
        </Ico>
      </At>
      <At $ml={37}>
        <Ico s={12} sw={1.4}>
          <path d="M1 1l10 10M11 1L1 11" />
        </Ico>
      </At>
    </TabStrip>
    <Toolbar>
      <At>
        <Txt w={43}>All tools</Txt>
      </At>
      <At $ml={23}>
        <Txt w={20}>Edit</Txt>
      </At>
      <At $ml={24}>
        <Txt w={44}>Convert</Txt>
      </At>
      <At $ml={23}>
        <Txt w={35}>E-Sign</Txt>
      </At>
      <At $ml={299}>
        <SearchButton>
          <Ico s={17} c="#222" sw={1.7}>
            <circle cx="7" cy="7" r="5.700" />
            <path d="M11.300 11.300L16 16" />
          </Ico>
        </SearchButton>
      </At>
      <VLine $ml={9} />
      <At $ml={17}>
        <Ico s={17} c="#727272" sw={1.5}>
          <path d="M1 1h11.500L16 4.500V15q0 1-1 1H2q-1 0-1-1zM4 1v4.500h7V1M4.500 16v-5.500h8V16M9 13v2" />
        </Ico>
      </At>
      <At $ml={24}>
        <Ico w={20} h={17} sw={1.7}>
          <path d="M7 12H4.800A3.600 3.600 0 0 1 4 5a5.300 5.300 0 0 1 10.200-.5A3.800 3.800 0 0 1 15 12h-2M10 16V7.500M7 10l3-3 3 3" />
        </Ico>
      </At>
      <At $ml={23}>
        <Ico w={18} h={17} sw={1.5}>
          <path d="M4 4V1h10v3M4 12.500H1V6q0-1 1-1h14q1 0 1 1v6.500h-3M4.500 9.500h9V16h-9zM6.500 12.500h5" />
        </Ico>
      </At>
      <VLine $ml={16} />
      <Pill $w={66} $bg="#6e6e6e" $ml={8} $pl={16}>
        <Txt w={34}>Share</Txt>
      </Pill>
      <Pill $w={119} $bg="linear-gradient(97deg, #ff6f57 8%, #a36fb8 48%, #6a6bff 78%)" $ml={9} $pl={12}>
        <Ico w={19} h={19} c="#fff" sw={1.8}>
          <path d="M11 3H3Q1 3 1 5v7.500q0 2 2 2h1.500v3.300l4-3.300H14q2 0 2-2V10" />
          <path d="M15 .5l1.200 2.800L19 4.500l-2.800 1.200L15 8.500l-1.200-2.800L11 4.500l2.800-1.200z" fill="#fff" stroke="none" />
          <path d="M8.800 7l.8 1.800 1.800.8-1.800.8-.8 1.800-.8-1.800-1.800-.8 1.800-.8z" fill="#fff" stroke="none" />
        </Ico>
        <Txt w={68}>AI Assistant</Txt>
      </Pill>
    </Toolbar>
    <Viewer>
      <Gutter>
        <Palette>
          <Grip />
          <Tool $on>
            <Ico s={32} c="none">
              <path d="M12 9v14l3.300-2.800 2 4 2-1-1.900-3.800H21z" fill="#fff" />
              <Fold />
            </Ico>
          </Tool>
          <Tool>
            <Ico s={32} sw={1.7}>
              <CommentShape />
              <Fold />
            </Ico>
          </Tool>
          <Tool>
            <Ico s={32} sw={1.7}>
              <path d="M21 8.500q1.500-1 2.700.2t.2 2.700L15 20.500l-3.200-3z" />
              <path d="M11 18.500l3.500 3q-3 2-6.500 1.800z" fill="#d0d0d0" />
              <path d="M16 22.500h6l2-3h-4z" fill="#7a7a7a" stroke="none" />
              <Fold />
            </Ico>
          </Tool>
          <Tool>
            <Ico s={32} sw={1.8}>
              <path d="M12 12c3-2.600 12-3 12.300 1.200.2 3.300-7.600 5.200-9.300 3.300-1.300-1.700 1.500-2.700 4-2.300M12 12c-5 3.500-4.500 8.500 6 8.500" />
              <Fold />
            </Ico>
          </Tool>
          <Tool>
            <Ico s={32} sw={1.7}>
              <path d="M8 8h17v17H8z" strokeDasharray="1.500 3" strokeLinecap="butt" strokeWidth="2" />
              <path d="M12.500 21.500l4-10.500 4 10.500M14 18h5" strokeWidth="1.900" />
              <Fold />
            </Ico>
          </Tool>
          <Tool>
            <Ico s={32} sw={1.7}>
              <path d="M8 23.500l2.500-9L18 8.500l5 5-3.500 6.500zM8.500 23l6-6M17 9.500l5.500 5.500" />
              <path d="M17 22.500c1-2.500 2.500-2.500 2 0s1.500 1 4 1" />
              <Fold />
            </Ico>
          </Tool>
        </Palette>
      </Gutter>
      <Doc>
        <PageTop>
          <Table $first>
            <CommandRow
              alt
              row={{
                h: 53,
                name: "deleteWedding",
                w: 85,
                fmt: "deleteWedding n/NAME",
                ex: "deleteWedding n/John & Jane Wedding",
                namePad: 10,
                fmtPad: 10,
              }}
            />
          </Table>
        </PageTop>
        <PageMain>
          <Table>
            <HeadRow>
              <HeadCell>
                <Txt w={38}>Action</Txt>
              </HeadCell>
              <HeadCell $last>
                <Txt w={104}>Format, Examples</Txt>
              </HeadCell>
            </HeadRow>
            {rows.map((r, i) => (
              <CommandRow key={r.name} row={r} alt={i % 2 === 1} />
            ))}
          </Table>
          <PageFooter>
            <Dot />
          </PageFooter>
        </PageMain>
        <BottomBar>
          <PageSize>
            <Txt w={65}>8.26 x 11.69 in</Txt>
          </PageSize>
          <HThumb />
        </BottomBar>
      </Doc>
      <ScrollStrip>
        <VThumb />
        <Corner />
      </ScrollStrip>
      <Rail>
        <RailCell $h={49}>
          <Ico w={18} h={18} c="#c0c2ff" sw={1.6}>
            <path d="M10 2.500H2.500q-1.500 0-1.500 1.500v11q0 1.500 1.500 1.500h13q1.500 0 1.500-1.500V10M4 6h4M4 9.500h4M4 13h9" />
            <path d="M14.500 0l1 2.500L18 3.500l-2.500 1-1 2.500-1-2.500-2.500-1 2.500-1z" fill="#c0c2ff" />
            <circle cx="10" cy="9.500" r="1" fill="#c0c2ff" />
          </Ico>
        </RailCell>
        <RailLine $w={23} />
        <RailCell $h={41}>
          <Ico s={18} sw={1.6}>
            <path d="M10.500 1a6.300 6.300 0 1 0 0 12.600H17V7.500A6.300 6.300 0 0 0 10.500 1zM8 5.800h5M8 8.800h4" />
            <path d="M3 4.500a7.500 7.500 0 0 0 8 12.300h2" />
          </Ico>
        </RailCell>
        <RailCell $h={36}>
          <Ico s={18} sw={1.7}>
            <path d="M1 1h9.500v16l-4.700-4L1 17z" />
            <path d="M13 4h5M13 7h5M13 10h5" strokeWidth="1.300" />
          </Ico>
        </RailCell>
        <RailCell $h={39}>
          <Ico s={18} sw={1.6}>
            <path d="M6 4.500h6.500l4 4V16q0 1.500-1.500 1.500H7Q5.500 17.500 5.500 16V5zM12 4.500v4.500h4.500" />
            <path d="M2 14V2.500Q2 1 3.500 1H9" />
          </Ico>
        </RailCell>
        <RailCell $h={547}>{null}</RailCell>
        <PageBox>
          <RailCell $h={30}>
            <Txt w={10}>15</Txt>
          </RailCell>
        </PageBox>
        <RailCell $h={37}>
          <Txt w={10}>15</Txt>
        </RailCell>
        <RailCell $h={35} $dx={2}>
          <Ico w={10} h={6} sw={2}>
            <path d="M1 5l4-4 4 4" />
          </Ico>
        </RailCell>
        <RailCell $h={34} $dx={2}>
          <Ico w={10} h={6} c="#7a7a7a" sw={2}>
            <path d="M1 1l4 4 4-4" />
          </Ico>
        </RailCell>
        <RailLine $w={33} />
        <RailCell $h={41} $dx={2}>
          <Ico s={17} sw={1.9}>
            <path d="M14.700 11.300A7 7 0 1 1 14 4.500M15.700 1v4.700H11" />
          </Ico>
        </RailCell>
        <RailCell $h={31} $dx={3}>
          <Ico w={20} h={21} sw={1.5}>
            <path d="M5 1h6l4 4v11q0 1.500-1.500 1.500h-9Q3 17.500 3 16V2.500Q3 1 5 1zM10.800 1v4.300H15M5.700 9l1-.6v5M9 10v.1M9 13v.1M11.500 9l1-.6v5" />
            <path d="M20 16v5h-5z" fill="#d0d0d0" stroke="none" />
          </Ico>
        </RailCell>
        <RailCell $h={38} $dx={2}>
          <Ico s={17} sw={1.7}>
            <circle cx="7" cy="7" r="6" />
            <path d="M11.500 11.500L16 16M7 4.500v5M4.500 7h5" />
          </Ico>
        </RailCell>
        <RailCell $h={34} $dx={2}>
          <Ico s={17} sw={1.7}>
            <circle cx="7" cy="7" r="6" />
            <path d="M11.500 11.500L16 16M4.500 7h5" />
          </Ico>
        </RailCell>
      </Rail>
    </Viewer>
  </Acrobat>
);

const FindBarView = () => (
  <FindBar>
    <FindGrip />
    <FindInput>
      <Txt w={39}>dietary</Txt>
    </FindInput>
    <At $ml={15} $fs={11} $c="#b8b8b8">
      <Txt w={23}>16/21</Txt>
    </At>
    <At $ml={15}>
      <Ico w={6} h={9} sw={2}>
        <path d="M4.800 1L1.300 4.500 4.800 8" />
      </Ico>
    </At>
    <At $ml={28}>
      <Ico w={6} h={9} sw={2}>
        <path d="M1.200 1l3.500 3.500L1.200 8" />
      </Ico>
    </At>
    <At $ml={24}>
      <Ico w={14} h={4} c="none">
        <g fill="#d0d0d0">
          <circle cx="1.500" cy="2" r="1" />
          <circle cx="7" cy="2" r="1" />
          <circle cx="12.500" cy="2" r="1" />
        </g>
      </Ico>
    </At>
    <VLine $ml={12} $h={18} />
    <At $ml={15}>
      <Ico s={9} sw={1.9}>
        <path d="M1.200 1.200l6.600 6.600M7.800 1.200L1.200 7.800" />
      </Ico>
    </At>
  </FindBar>
);

const WeddingView = () => (
  <WeddingWindow>
    <TitleBar>
      <Book s={14} />
      <At $ml={7}>
        <Txt w={74}>WeddingHero</Txt>
      </At>
      <At $ml={703}>
        <Ico w={10} h={10} c="#8a8a8a" sw={1}>
          <path d="M0 5.500h10" />
        </Ico>
      </At>
      <At $ml={35}>
        <Ico s={10} c="#8a8a8a" sw={1}>
          <rect x=".5" y=".5" width="9" height="9" rx="1" />
        </Ico>
      </At>
      <At $ml={36}>
        <Ico s={10} c="#8a8a8a" sw={1}>
          <path d="M0 0l10 10M10 0L0 10" />
        </Ico>
      </At>
    </TitleBar>
    <MenuBar>
      <Txt w={24}>File</Txt>
      <Txt w={36}>Help</Txt>
    </MenuBar>
    <CommandArea>
      <CommandInput>
        <Txt w={27}>edit</Txt>
      </CommandInput>
    </CommandArea>
    <ResultArea>
      <ResultBox>
        <ResultTop>
          <ResultText>
            <ResultLine>
              <Txt w={874}>
                on identified by the index number used in the displayed person list. Existing values will be overwritten by the input values.
              </Txt>
            </ResultLine>
            <ResultLine $ml={1}>
              <Txt w={829}>
                ositive integer) [n/NAME] [p/PHONE] [e/EMAIL] [a/ADDRESS] [t/TAG]... [d/DIETARY_RESTRICTION] [t/Tag1][r/RSVP]
              </Txt>
            </ResultLine>
          </ResultText>
          <Bar $w={10} $h={33} />
        </ResultTop>
        <ResultBottom>
          <Bar $w={686} $h={10} />
          <ScrollCorner />
        </ResultBottom>
      </ResultBox>
    </ResultArea>
    <NameArea>
      <NameBox>
        <Txt w={243}>Wedding Name: John and Jane</Txt>
      </NameBox>
    </NameArea>
    <Split>
      <Pane $w={494}>
        <PaneHead>
          <Txt w={65}>All Guests</Txt>
        </PaneHead>
        <PaneBody>
          <List $w={435}>
            {guests.map((g, i) => (
              <Guest key={g.n} $alt={i % 2 === 1}>
                <CardHead $h={61} $pt={9}>
                  <CardTitle>
                    <Txt w={g.no[1]}>{g.no[0]}</Txt>
                    <Txt w={g.nw}>{g.n}</Txt>
                  </CardTitle>
                  <Tags>
                    {g.tags.map(([t, w]) => (
                      <Tag key={t}>
                        <Txt w={w}>{t}</Txt>
                      </Tag>
                    ))}
                  </Tags>
                </CardHead>
                <GuestBody>
                  <Fields>
                    {g.fields.map(([t, w]) => (
                      <div key={t}>
                        <Txt w={w}>{t}</Txt>
                      </div>
                    ))}
                  </Fields>
                  <Panel $w={212} $h={105} $p="8px 0 0 8px">
                    {g.chips.map((d) => (
                      <GuestChip key={d.t} d={d} h={27} b />
                    ))}
                    <GuestPanelText>
                      <Txt w={59}>TableId: 1</Txt>
                    </GuestPanelText>
                  </Panel>
                </GuestBody>
              </Guest>
            ))}
          </List>
          <ListBar>
            <Bar $w={10} $h={449} />
          </ListBar>
        </PaneBody>
      </Pane>
      <Pane $w={432}>
        <PaneHead>
          <Txt w={42}>Tables</Txt>
        </PaneHead>
        <PaneBody>
          <List $w={388}>
            {tables.map((t) => (
              <TableCard key={t.id} $alt={t.id === 2}>
                <CardHead $h={77} $pt={10}>
                  <CardTitle>
                    <Txt w={t.idW}>{`TableId: ${t.id}`}</Txt>
                  </CardTitle>
                  <TableFacts>
                    <div>
                      <Txt w={74}>Capacity: 20</Txt>
                    </div>
                    <div>
                      <Txt w={101}>{t.occ}</Txt>
                    </div>
                  </TableFacts>
                </CardHead>
                <TableBody>
                  <Panel $w={187} $p="8px 0 8px 15px">
                    <SumLabel>
                      <Txt w={132}>Dietary Restrictions:</Txt>
                    </SumLabel>
                    <ChipRows rows={t.diet} />
                    <SumLabel>
                      <Txt w={84}>RSVP Status:</Txt>
                    </SumLabel>
                    <ChipRows rows={t.rsvp} />
                  </Panel>
                  <GuestNames>
                    <SumLabel $h={20}>
                      <Txt w={48}>Guests:</Txt>
                    </SumLabel>
                    {t.names.map(([n, w]) => (
                      <GuestName key={n}>
                        <Txt w={w}>{n}</Txt>
                      </GuestName>
                    ))}
                  </GuestNames>
                </TableBody>
              </TableCard>
            ))}
          </List>
        </PaneBody>
      </Pane>
    </Split>
    <StatusBar>
      <Txt w={149}>{".\\data\\weddinghero.json"}</Txt>
    </StatusBar>
    <EdgeShade />
  </WeddingWindow>
);

export default function App() {
  return (
    <>
      <Global />
      <Screen>
        <TaskbarView />
        <AcrobatView />
        <WeddingView />
        <FindBarView />
        <Thumb />
      </Screen>
    </>
  );
}
